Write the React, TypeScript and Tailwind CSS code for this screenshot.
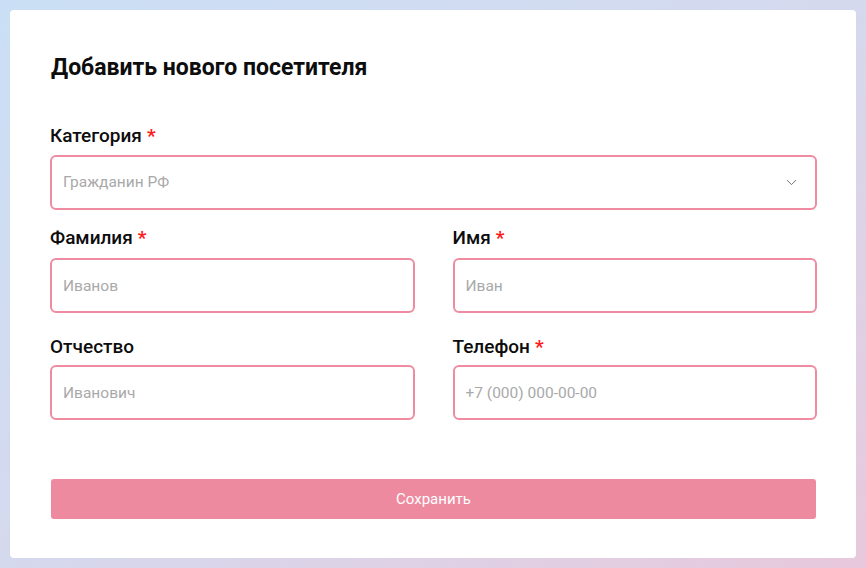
import React from 'react';
import { ChevronDown } from 'lucide-react';

const font = { fontFamily: 'Roboto, "Noto Sans", sans-serif' };

function Label({ text, required }: { text: string; required?: boolean }) {
  return (
    <label className="block text-[19px] leading-[24px] font-medium text-[#0d0d0d]">
      {text}
      {required && <span className="ml-[5px] font-bold text-[#ff1a1a]">*</span>}
    </label>
  );
}

function Field({ placeholder }: { placeholder: string }) {
  return (
    <input
      placeholder={placeholder}
      className="block w-full h-[55px] rounded-[6px] border-2 border-[#f08ca2] px-[11px] text-[15.5px] text-[#333] placeholder:text-[#a9a9a9] outline-none"
      style={font}
    />
  );
}

export default function App() {
  return (
    <div className="h-[568px] w-full bg-gradient-to-br from-[#cadff5] via-[#d5d9ee] to-[#e8c8dc] pl-[10px] pr-[10px] py-[10px]" style={font}>
      <div className="h-full rounded-[4px] bg-white pl-[40px] pr-[39px] pt-[44px]">
        <h1 className="text-[23px] leading-[28px] font-bold text-[#0d0d0d] pl-[1px]">Добавить нового посетителя</h1>

        <div className="mt-[42px]">
          <Label text="Категория" required />
          <div className="relative mt-[7px]">
            <div className="flex h-[55px] items-center justify-between rounded-[6px] border-2 border-[#f08ca2] px-[11px]">
              <span className="text-[15.5px] text-[#a9a9a9]">Гражданин РФ</span>
              <ChevronDown size={17} strokeWidth={1.3} className="mr-[4px] text-[#666]" />
            </div>
          </div>
        </div>

        <div className="mt-[16px] grid grid-cols-2 gap-x-[38px]">
          <div>
            <Label text="Фамилия" required />
            <div className="mt-[8px]"><Field placeholder="Иванов" /></div>
          </div>
          <div>
            <Label text="Имя" required />
            <div className="mt-[8px]"><Field placeholder="Иван" /></div>
          </div>
          <div className="mt-[22px]">
            <Label text="Отчество" />
            <div className="mt-[6px]"><Field placeholder="Иванович" /></div>
          </div>
          <div className="mt-[22px]">
            <Label text="Телефон" required />
            <div className="mt-[6px]"><Field placeholder="+7 (000) 000-00-00" /></div>
          </div>
        </div>

        <button className="mx-[1px] mt-[59px] block h-[40px] w-[calc(100%-2px)] rounded-[3px] bg-[#ee8aa0] text-[15px] text-white">
          Сохранить
        </button>
      </div>
    </div>
  );
}
